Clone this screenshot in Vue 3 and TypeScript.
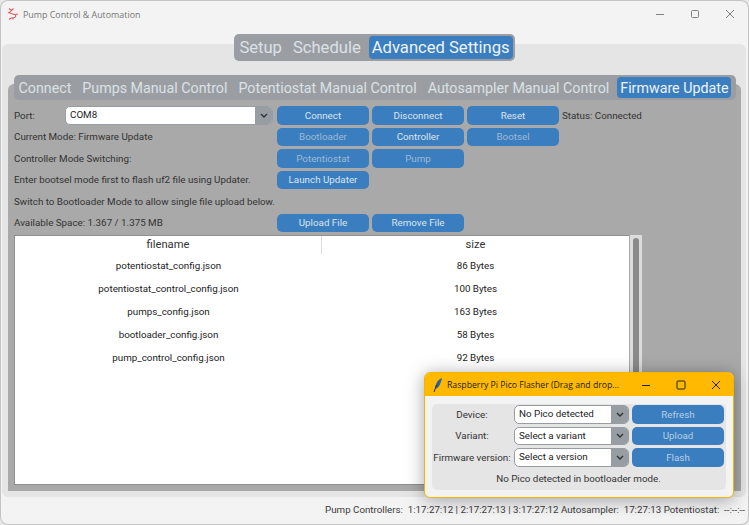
<template>
  <div class="window">
    <div class="titlebar">
      <svg class="app-icon" width="12" height="12" viewBox="0 0 12 12" fill="none" stroke="#dc5c5c" stroke-width="1.1">
        <path d="M2 0.5 L4.5 2.5 M6.5 0.5 L4.5 2.5 C2.5 3.5 2 5 4 5.5 L7.5 6.5 C9.5 7 9 9 7.5 9.5 L4 10 M1 4.5 L3 5 M8 6.5 L11 6 M2 11.5 L4 10 M6 11.5 L6 9.7" />
      </svg>
      <span class="title">Pump Control &amp; Automation</span>
      <div class="win-controls">
        <svg width="10" height="10" viewBox="0 0 10 10" stroke="#808080" fill="none"><path d="M1 5.5h8" /></svg>
        <svg width="10" height="10" viewBox="0 0 10 10" stroke="#808080" fill="none"><rect x="1.5" y="1.5" width="7" height="7" rx="1" /></svg>
        <svg width="10" height="10" viewBox="0 0 10 10" stroke="#808080" fill="none"><path d="M1 1l8 8M9 1l-8 8" /></svg>
      </div>
    </div>

    <div class="main-tabs">
      <div class="seg">
        <span v-for="t in mainTabs" :key="t" :class="['seg-item', { active: t === 'Advanced Settings' }]">{{ t }}</span>
      </div>
    </div>

    <div class="outer-panel">
      <div class="sub-tabs">
        <div class="seg sub">
          <span v-for="t in subTabs" :key="t" :class="['seg-item', { active: t === 'Firmware Update' }]">{{ t }}</span>
        </div>
      </div>

      <div class="inner-panel">
        <div class="controls">
          <div class="port-row">
            <span class="port-label">Port:</span>
            <div class="combo port-combo">
              <span class="combo-value">COM8</span>
              <span class="combo-arrow"><svg width="8" height="5" viewBox="0 0 8 5" fill="none" stroke="#333" stroke-width="1.4"><path d="M1 1l3 3 3-3" /></svg></span>
            </div>
          </div>
          <button class="btn">Connect</button>
          <button class="btn">Disconnect</button>
          <button class="btn">Reset</button>
          <span class="label status">Status: Connected</span>

          <span class="label">Current Mode: Firmware Update</span>
          <button class="btn off">Bootloader</button>
          <button class="btn">Controller</button>
          <button class="btn off">Bootsel</button>
          <span></span>

          <span class="label">Controller Mode Switching:</span>
          <button class="btn off">Potentiostat</button>
          <button class="btn off">Pump</button>
          <span></span>
          <span></span>

          <span class="label">Enter bootsel mode first to flash uf2 file using Updater.</span>
          <button class="btn">Launch Updater</button>
          <span></span>
          <span></span>
          <span></span>

          <span class="label full">Switch to Bootloader Mode to allow single file upload below.</span>

          <span class="label">Available Space: 1.367 / 1.375 MB</span>
          <button class="btn">Upload File</button>
          <button class="btn">Remove File</button>
          <span></span>
          <span></span>
        </div>

        <div class="table-row">
          <div class="table">
            <div class="thead">
              <span class="th first">filename</span>
              <span class="th">size</span>
            </div>
            <div v-for="f in files" :key="f.name" class="tr">
              <span class="td first">{{ f.name }}</span>
              <span class="td">{{ f.size }}</span>
            </div>
          </div>
          <div class="scrollbar"><div class="thumb"></div></div>
        </div>
      </div>
    </div>

    <div class="statusbar">Pump Controllers:&nbsp; 1:17:27:12 | 2:17:27:13 | 3:17:27:12 Autosampler:&nbsp; 17:27:13 Potentiostat:&nbsp; --:--:--</div>

    <div class="flasher">
      <div class="fl-title">
        <svg width="12" height="16" viewBox="0 0 12 16">
          <path d="M10 1 C7 2 4 5 3.5 10 L3 12 C6 11.5 8.5 8 10 1Z" fill="#2f5f9f" />
          <path d="M2 15 L4.5 8" stroke="#1d2f55" stroke-width="1" fill="none" />
        </svg>
        <span class="fl-name">Raspberry Pi Pico Flasher (Drag and drop...</span>
        <div class="fl-controls">
          <svg width="10" height="10" viewBox="0 0 10 10" stroke="#222" fill="none"><path d="M1 5.5h8" /></svg>
          <svg width="10" height="10" viewBox="0 0 10 10" stroke="#222" fill="none"><rect x="1" y="1" width="8" height="8" rx="1" /></svg>
          <svg width="10" height="10" viewBox="0 0 10 10" stroke="#222" fill="none"><path d="M1 1l8 8M9 1l-8 8" /></svg>
        </div>
      </div>
      <div class="fl-body">
        <div class="fl-card">
          <template v-for="r in flashRows" :key="r.label">
            <span class="fl-label">{{ r.label }}</span>
            <div class="combo fl-combo">
              <span class="combo-value">{{ r.value }}</span>
              <span class="combo-arrow"><svg width="8" height="5" viewBox="0 0 8 5" fill="none" stroke="#333" stroke-width="1.4"><path d="M1 1l3 3 3-3" /></svg></span>
            </div>
            <button class="btn fl-btn">{{ r.action }}</button>
          </template>
          <span class="fl-msg">No Pico detected in bootloader mode.</span>
        </div>
      </div>
    </div>
  </div>
</template>

<script setup lang="ts">
const mainTabs = ['Setup', 'Schedule', 'Advanced Settings']
const subTabs = ['Connect', 'Pumps Manual Control', 'Potentiostat Manual Control', 'Autosampler Manual Control', 'Firmware Update']

const files = [
  { name: 'potentiostat_config.json', size: '86 Bytes' },
  { name: 'potentiostat_control_config.json', size: '100 Bytes' },
  { name: 'pumps_config.json', size: '163 Bytes' },
  { name: 'bootloader_config.json', size: '58 Bytes' },
  { name: 'pump_control_config.json', size: '92 Bytes' }
]

const flashRows = [
  { label: 'Device:', value: 'No Pico detected', action: 'Refresh' },
  { label: 'Variant:', value: 'Select a variant', action: 'Upload' },
  { label: 'Firmware version:', value: 'Select a version', action: 'Flash' }
]
</script>

<style>
html, body {
  margin: 0;
  background: #e8e8e8;
}
</style>

<style scoped>
.window {
  position: relative;
  width: 747px;
  height: 523px;
  margin: 1px;
  box-sizing: border-box;
  background: #f3f3f3;
  border-radius: 7px;
  box-shadow: 0 0 0 1px #c4c4c4;
  overflow: hidden;
  font-family: Roboto, "Liberation Sans", sans-serif;
  font-size: 9.8px;
  color: #333;
}

.titlebar {
  display: flex;
  align-items: center;
  height: 26px;
  padding-left: 6px;
}

.app-icon {
  margin-right: 4px;
}

.title {
  font-family: "Open Sans", sans-serif;
  font-size: 8.9px;
  color: #777;
}

.win-controls {
  display: flex;
  gap: 25px;
  margin-left: auto;
  margin-right: 13px;
  align-items: center;
}

.main-tabs {
  display: flex;
  justify-content: center;
  height: 17px;
  box-sizing: border-box;
  padding-top: 7px;
  position: relative;
  z-index: 1;
}

.seg {
  display: flex;
  align-items: center;
  align-self: flex-start;
  height: 27px;
  flex-shrink: 0;
  box-sizing: border-box;
  padding: 2px;
  background: #9a9ea3;
  border-radius: 5px;
}

.seg-item {
  padding: 1px 3px 0;
  line-height: 22px;
  border-radius: 4px;
  color: #dce1e6;
  font-size: 16.6px;
  margin-right: 5px;
  white-space: nowrap;
}

.seg-item:last-child {
  margin-right: 0;
}

.seg-item.active {
  background: #3a7ebf;
  color: #eef3f8;
}

.outer-panel {
  margin: 0 2px 0 1px;
  height: 453px;
  background: #e5e5e5;
  border-radius: 6px;
  padding: 31px 5px 0 6px;
  box-sizing: border-box;
}

.sub-tabs {
  display: flex;
  justify-content: center;
  height: 9px;
  position: relative;
  z-index: 1;
}

.seg.sub {
  height: 25px;
  width: 722px;
}

.seg.sub .seg-item {
  line-height: 20px;
  font-size: 14.25px;
}

.inner-panel {
  background: #a9a9a9;
  height: 407px;
  box-sizing: border-box;
  border-radius: 6px 6px 0 0;
  padding: 22px 0 0 6px;
}

.controls {
  display: grid;
  grid-template-columns: 260px 92px 92px 92px 1fr;
  grid-auto-rows: 18.5px;
  column-gap: 3px;
  row-gap: 3px;
  align-items: center;
}

.port-row {
  display: flex;
  align-items: center;
}

.port-label {
  width: 51px;
}

.label {
  white-space: nowrap;
}

.full {
  grid-column: 1 / -1;
}

.combo {
  display: flex;
  height: 18.5px;
  box-sizing: border-box;
  border: 1.5px solid #979da2;
  border-radius: 5px;
  background: #fff;
  overflow: hidden;
}

.port-combo {
  flex: 1;
  margin-right: 1px;
}

.combo-value {
  flex: 1;
  padding-left: 4px;
  line-height: 15.5px;
  color: #222;
}

.combo-arrow {
  display: flex;
  align-items: center;
  justify-content: center;
  width: 17px;
  background: #979da2;
}

.btn {
  height: 18.5px;
  padding: 0;
  border: none;
  border-radius: 5px;
  background: #3a7ebf;
  color: #dce4ee;
  font: inherit;
}

.btn.off {
  color: #9fb9d3;
}

.btn.fl-btn {
  color: #b7cde3;
}

.table-row {
  display: flex;
  gap: 1px;
  margin-top: 3px;
}

.table {
  width: 615px;
  height: 250px;
  box-sizing: border-box;
  border-style: solid;
  border-color: #8f8f8f;
  border-width: 1px 0 1px 1px;
  background: #fff;
}

.thead,
.tr {
  display: grid;
  grid-template-columns: 307px 1fr;
  text-align: center;
}

.thead {
  height: 18px;
  align-items: center;
}

.th {
  font-size: 11.2px;
  line-height: 18px;
}

.th.first {
  border-right: 1px solid #ddd;
}

.tr {
  height: 23px;
  line-height: 23px;
  color: #222;
}

.scrollbar {
  width: 12px;
  height: 250px;
  background: #dcdcdc;
  padding: 3px;
  box-sizing: border-box;
}

.thumb {
  width: 6px;
  height: 100%;
  border-radius: 3px;
  background: #8a8a8a;
}

.statusbar {
  text-align: right;
  padding: 7px 3px 0 0;
  color: #3a3a3a;
  font-size: 9.75px;
}

.flasher {
  position: absolute;
  left: 423px;
  top: 371px;
  width: 310px;
  height: 126px;
  box-sizing: border-box;
  border: 1px solid #f3b600;
  border-radius: 6px;
  background: #f3f3f3;
  box-shadow: 0 2px 18px rgba(0, 0, 0, 0.35);
  overflow: hidden;
}

.fl-title {
  display: flex;
  align-items: center;
  height: 23px;
  padding-left: 7px;
  background: #ffb900;
}

.fl-name {
  margin-left: 3px;
  font-family: "Open Sans", sans-serif;
  font-size: 8.7px;
  color: #1c1c1c;
}

.fl-controls {
  display: flex;
  gap: 25px;
  margin-left: auto;
  margin-right: 12px;
}

.fl-body {
  padding: 8px 7px 0 7px;
}

.fl-card {
  display: grid;
  grid-template-columns: 78px 115px 92px;
  grid-auto-rows: 18.5px;
  gap: 3px;
  align-items: center;
  padding: 1px 2px 1px 1px;
  background: #e5e5e5;
  border-radius: 5px;
  width: 294px;
  height: 86px;
  box-sizing: border-box;
}

.fl-label {
  text-align: center;
  white-space: nowrap;
}

.fl-msg {
  grid-column: 1 / -1;
  text-align: center;
}
</style>
